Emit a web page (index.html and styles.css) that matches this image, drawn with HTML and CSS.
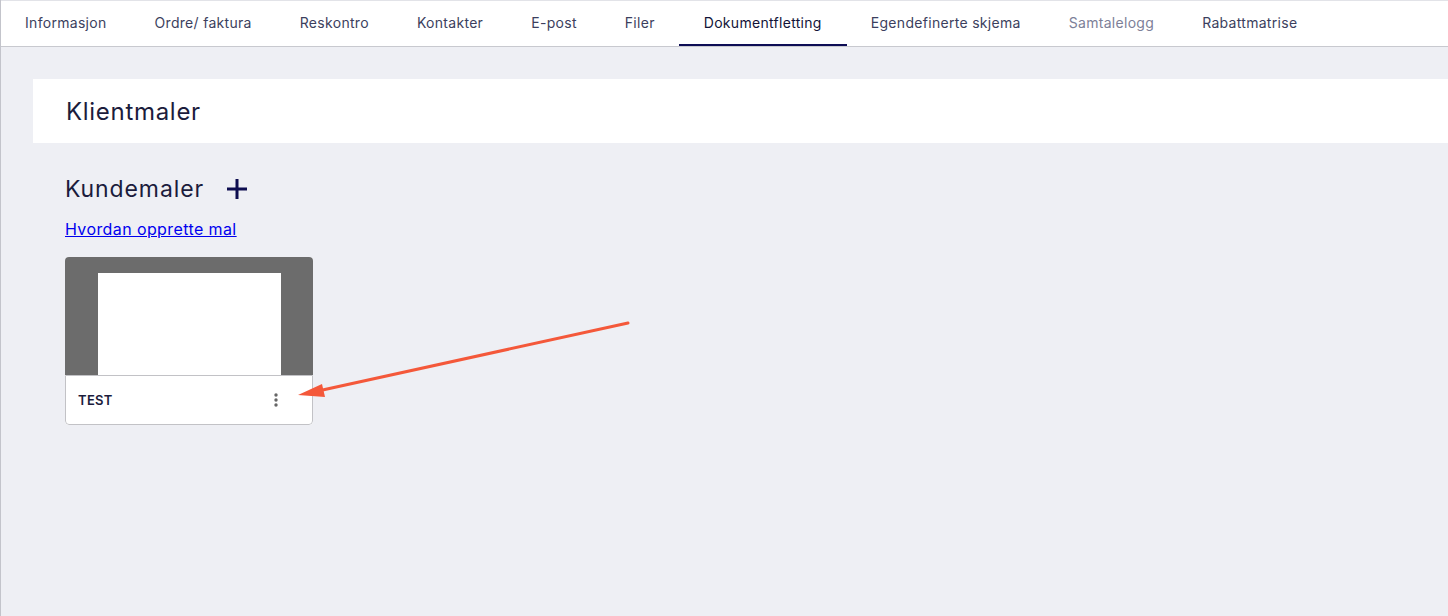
FILE: index.html
```html
<!DOCTYPE html>
<html lang="no">
<head>
<meta charset="utf-8">
<title>Dokumentfletting</title>
<link rel="stylesheet" href="styles.css">
</head>
<body>
<div class="app">
  <nav class="tabs">
    <a class="tab">Informasjon</a>
    <a class="tab">Ordre/ faktura</a>
    <a class="tab">Reskontro</a>
    <a class="tab">Kontakter</a>
    <a class="tab">E-post</a>
    <a class="tab">Filer</a>
    <a class="tab active">Dokumentfletting</a>
    <a class="tab">Egendefinerte skjema</a>
    <a class="tab muted">Samtalelogg</a>
    <a class="tab">Rabattmatrise</a>
  </nav>
  <main class="content">
    <section class="panel">
      <h1 class="panel-title">Klientmaler</h1>
    </section>
    <section class="templates">
      <div class="section-head">
        <h2 class="section-title">Kundemaler</h2>
        <svg class="plus" width="22" height="22" viewBox="0 0 22 22"><path d="M11 1V21M1 11H21" stroke="#0d0d4f" stroke-width="3" fill="none"/></svg>
      </div>
      <a class="help-link" href="#">Hvordan opprette mal</a>
      <div class="cards">
        <div class="card">
          <div class="card-preview"><div class="page"></div></div>
          <div class="card-footer">
            <span class="card-name">TEST</span>
            <svg class="kebab" width="4" height="14" viewBox="0 0 4 14"><circle cx="2" cy="2" r="1.7" fill="#666"/><circle cx="2" cy="7" r="1.7" fill="#666"/><circle cx="2" cy="12" r="1.7" fill="#666"/></svg>
          </div>
        </div>
      </div>
    </section>
  </main>
  <svg class="annotation" width="1448" height="616" viewBox="0 0 1448 616">
    <line x1="628" y1="323" x2="318" y2="391" stroke="#f4583a" stroke-width="3" stroke-linecap="round"/>
    <polygon points="298,395 322,384 325,397" fill="#f4583a"/>
  </svg>
</div>
</body>
</html>
```

FILE: styles.css
```css
html, body {
  margin: 0;
  padding: 0;
}
body {
  font-family: Inter, "Noto Sans", "Liberation Sans", sans-serif;
  background: #eeeff4;
  color: #1b1c3c;
}
.app {
  position: relative;
  min-height: 616px;
  border-left: 1px solid #c3c4cb;
  box-sizing: border-box;
}
.tabs {
  display: flex;
  height: 47px;
  background: #fff;
  border-top: 1px solid #e2e3e8;
  border-bottom: 1px solid #c8c9cf;
  box-sizing: border-box;
}
.tab {
  display: flex;
  align-items: center;
  padding: 0 24px;
  font-size: 14px;
  letter-spacing: 0.3px;
  color: #3c3f5e;
  box-sizing: border-box;
  border-bottom: 2px solid transparent;
  white-space: nowrap;
}
.tab.active {
  color: #121338;
  border-bottom-color: #0d0d55;
  padding: 0 25px;
}
.tab.muted {
  color: #7d8098;
}
.content {
  padding: 32px 0 0 32px;
}
.panel {
  background: #fff;
  height: 64px;
  display: flex;
  align-items: center;
  padding-left: 33px;
}
.panel-title {
  margin: 0;
  font-size: 24px;
  letter-spacing: 0.7px;
  font-weight: 400;
  color: #1b1c3c;
}
.templates {
  padding: 34px 0 0 32px;
}
.section-head {
  display: flex;
  align-items: center;
  gap: 22px;
  height: 24px;
}
.section-title {
  margin: 0;
  font-size: 23px;
  letter-spacing: 0.9px;
  font-weight: 400;
  color: #1b1c3c;
}
.help-link {
  display: inline-block;
  margin-top: 18px;
  font-size: 16px;
  letter-spacing: 0.4px;
  color: #0000ee;
  text-decoration: underline;
}
.cards {
  display: flex;
  margin-top: 18px;
}
.card {
  width: 248px;
  border-radius: 4px;
  overflow: hidden;
  background: #fff;
}
.card-preview {
  background: #6c6c6c;
  height: 118px;
  display: flex;
  justify-content: center;
  align-items: flex-end;
}
.page {
  width: 183px;
  height: 102px;
  background: #fff;
}
.card-footer {
  height: 50px;
  border: 1px solid #c2c2c6;
  border-radius: 0 0 4px 4px;
  box-sizing: border-box;
  display: flex;
  align-items: center;
  justify-content: space-between;
  padding: 0 34px 0 12px;
}
.card-name {
  font-size: 13px;
  font-weight: 600;
  color: #1b1c3c;
  letter-spacing: 0.3px;
}
.annotation {
  position: absolute;
  left: -1px;
  top: 0;
  pointer-events: none;
}
```
